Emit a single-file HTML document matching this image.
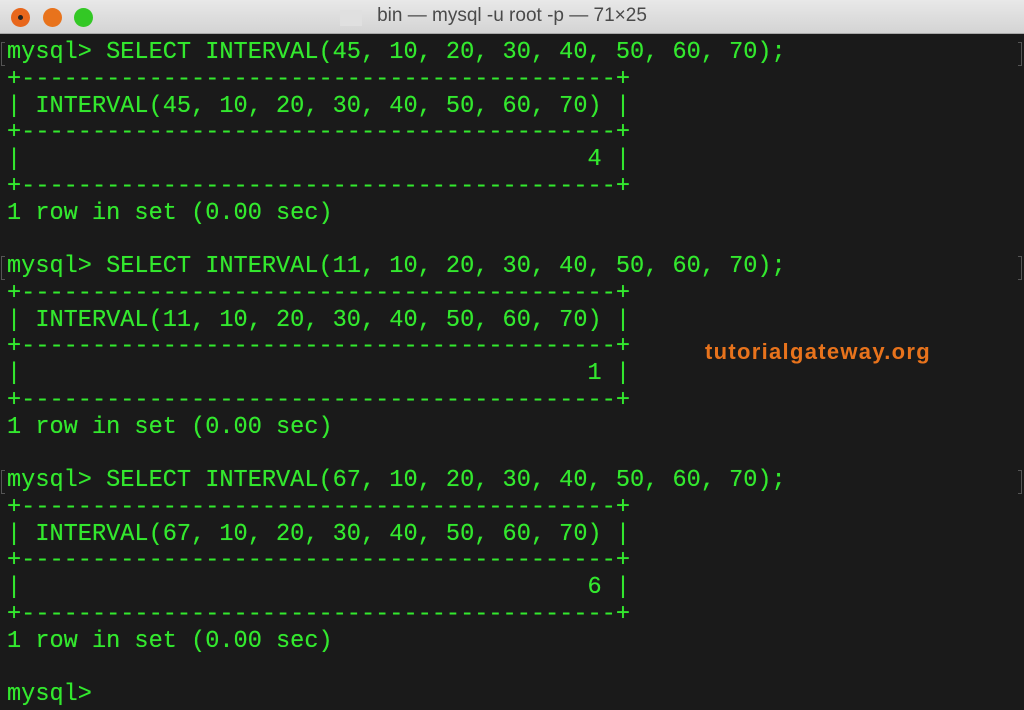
<!DOCTYPE html>
<html><head><style>
body{margin:0;width:1024px;height:710px;overflow:hidden;background:#1a1a1a;font-family:"Liberation Sans",sans-serif}
.tb{position:absolute;left:0;top:0;width:1024px;height:33px;background:linear-gradient(#e8e8e8,#d4d4d4);border-bottom:1px solid #a8a8a8}
.dot{position:absolute;top:8px;width:19px;height:19px;border-radius:50%}
.title{position:absolute;top:5px;left:0;width:1024px;text-align:center;font-size:19px;color:#4a4a4a}
.t{position:absolute;left:7px;margin:0;font-family:"Liberation Mono",monospace;font-size:23.6px;color:#33e82e;white-space:pre;line-height:26.75px;text-shadow:0 0 0.4px #33e82e}
.logo{position:absolute;left:705px;top:339px;font-size:22px;font-weight:bold;color:#e8731c;letter-spacing:1.3px}
.br{position:absolute;width:3px;height:22px;border:1px solid #555;border-right:none}
</style></head><body>
<div class="tb">
<div class="dot" style="left:11px;background:#e8671c"><div style="position:absolute;left:7px;top:7px;width:5px;height:5px;border-radius:50%;background:#222"></div></div>
<div class="dot" style="left:43px;background:#e8731c"></div>
<div class="dot" style="left:74px;background:#33c825"></div>
<div style="position:absolute;left:340px;top:10px;width:22px;height:16px;background:#e0e0e0"></div>
<div class="title">bin — mysql -u root -p — 71×25</div>
</div>
<div class="br" style="left:1px;top:42px"></div>
<div class="br" style="left:1px;top:256px"></div>
<div class="br" style="left:1px;top:470px"></div>
<div class="br" style="left:1018px;top:42px;border:1px solid #555;border-left:none"></div>
<div class="br" style="left:1018px;top:256px;border:1px solid #555;border-left:none"></div>
<div class="br" style="left:1018px;top:470px;border:1px solid #555;border-left:none"></div>
<pre class="t" style="top:40px">mysql&gt; SELECT INTERVAL(45, 10, 20, 30, 40, 50, 60, 70);
+------------------------------------------+
| INTERVAL(45, 10, 20, 30, 40, 50, 60, 70) |
+------------------------------------------+
|                                        4 |
+------------------------------------------+
1 row in set (0.00 sec)

mysql&gt; SELECT INTERVAL(11, 10, 20, 30, 40, 50, 60, 70);
+------------------------------------------+
| INTERVAL(11, 10, 20, 30, 40, 50, 60, 70) |
+------------------------------------------+
|                                        1 |
+------------------------------------------+
1 row in set (0.00 sec)

mysql&gt; SELECT INTERVAL(67, 10, 20, 30, 40, 50, 60, 70);
+------------------------------------------+
| INTERVAL(67, 10, 20, 30, 40, 50, 60, 70) |
+------------------------------------------+
|                                        6 |
+------------------------------------------+
1 row in set (0.00 sec)

mysql&gt;</pre>
<div class="logo">tutorialgateway.org</div>
</body></html>
